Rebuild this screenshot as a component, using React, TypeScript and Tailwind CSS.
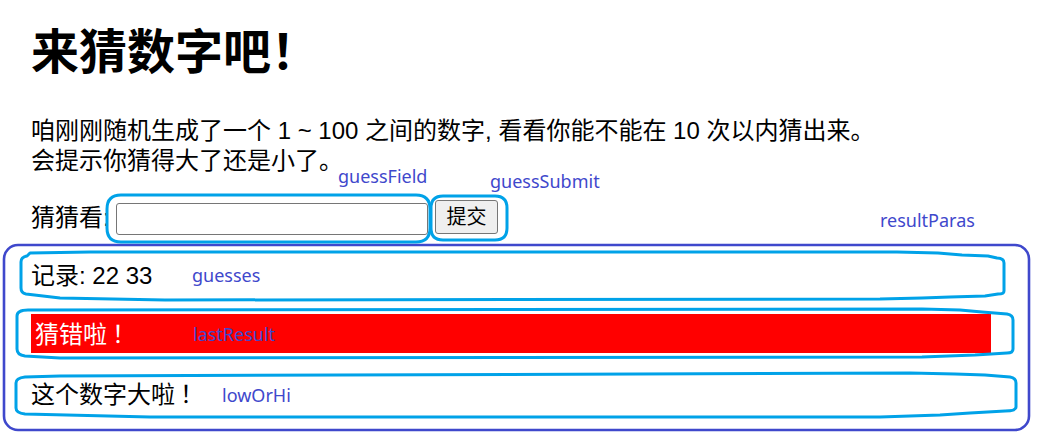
import React from 'react'

const body = '"Liberation Sans", "Noto Sans CJK SC", sans-serif'
const note = '"Noto Sans", "Liberation Sans", sans-serif'

function Note({ text, className }: { text: string; className: string }) {
  return (
    <div
      className={`absolute text-[18px] leading-none text-[#3f48cc] whitespace-nowrap ${className}`}
      style={{ fontFamily: note }}
    >
      {text}
    </div>
  )
}

export default function App() {
  return (
    <div className="relative w-[1043px] h-[448px] overflow-hidden bg-white text-black" style={{ fontFamily: body }}>
      <div className="w-[991px] pl-[31px] text-[24px]">
        <h1 className="mt-[25px] h-[56px] text-[48px] leading-[56px] font-bold">来猜数字吧！</h1>
        <p className="mt-[35px] leading-[30px]">
          咱刚刚随机生成了一个 1 ~ 100 之间的数字, 看看你能不能在 10 次以内猜出来。
          <br />
          会提示你猜得大了还是小了。
        </p>
        <div className="mt-[24px] flex h-[36px] items-center">
          <label className="w-[85px] whitespace-nowrap leading-[28px]">猜猜看:</label>
          <input className="mt-[2px] h-[32px] w-[312px] rounded-[3px] border border-[#767676] bg-white px-1 outline-none" />
          <button className="ml-[7px] mb-[2px] h-[34px] w-[63px] rounded-[3px] border border-[#767676] bg-[#efefef] text-[20px] leading-none">
            提交
          </button>
        </div>
        <div className="flex flex-col">
          <p className="mt-[26px] leading-[28px]">记录: 22 33</p>
          <p className="mt-[24px] bg-[#ff0000] px-[4px] pt-[5px] pb-[3px] leading-[31px] text-white">
            猜错啦<span className="ml-[5px]">！</span>
          </p>
          <p className="mt-[28px] leading-[28px]">
            这个数字大啦<span className="ml-[5px]">！</span>
          </p>
        </div>
      </div>

      <svg className="pointer-events-none absolute left-0 top-0" width="1043" height="448" viewBox="0 0 1043 448" fill="none">
        <rect x="4" y="245" width="1025" height="185" rx="14" stroke="#3f48cc" strokeWidth="2.6" />
        <g stroke="#00a2e8" strokeWidth="3" strokeLinejoin="round">
          <path d="M121 195 H416 Q430 195 430 209 V228 Q430 242 416 242 H121 Q107 242 107 228 V209 Q107 195 121 195 Z" />
          <path d="M443 196 H495 Q507 196 507 208 V228 Q507 240 495 240 H443 Q431 240 431 228 V208 Q431 196 443 196 Z" />
          <path d="M30 253 L90 252 L897 252 L938 253 L962 255 L988 256 L997 258 Q1004 258 1004 263 L1004 291 Q1004 294 998 294 L985 296 L950 297 L922 298 L880 299 L165 300 L60 298 L26 294 Q21 293 21 288 L21 262 Q21 257 27 256 Z" />
          <path d="M28 310 L922 309 L960 310 L982 312 L1007 314 Q1013 315 1013 320 L1013 349 Q1013 353 1007 353 L975 355 L922 357 L60 358 L25 356 Q17 355 17 349 L17 316 Q17 310 28 310 Z" />
          <path d="M25 377 L60 376 L910 373 L955 374 L985 375 L1010 377 Q1016 378 1016 383 L1016 407 Q1016 411 1005 411 L970 413 L940 415 L880 417 L150 417 L25 414 Q16 413 16 408 L16 383 Q16 378 25 377 Z" />
        </g>
      </svg>

      <Note text="guessField" className="left-[338px] top-[167px]" />
      <Note text="guessSubmit" className="left-[490px] top-[172px]" />
      <Note text="resultParas" className="left-[880px] top-[211px]" />
      <Note text="guesses" className="left-[192px] top-[266px]" />
      <Note text="lastResult" className="left-[193px] top-[325px]" />
      <Note text="lowOrHi" className="left-[222px] top-[386px]" />
    </div>
  )
}
